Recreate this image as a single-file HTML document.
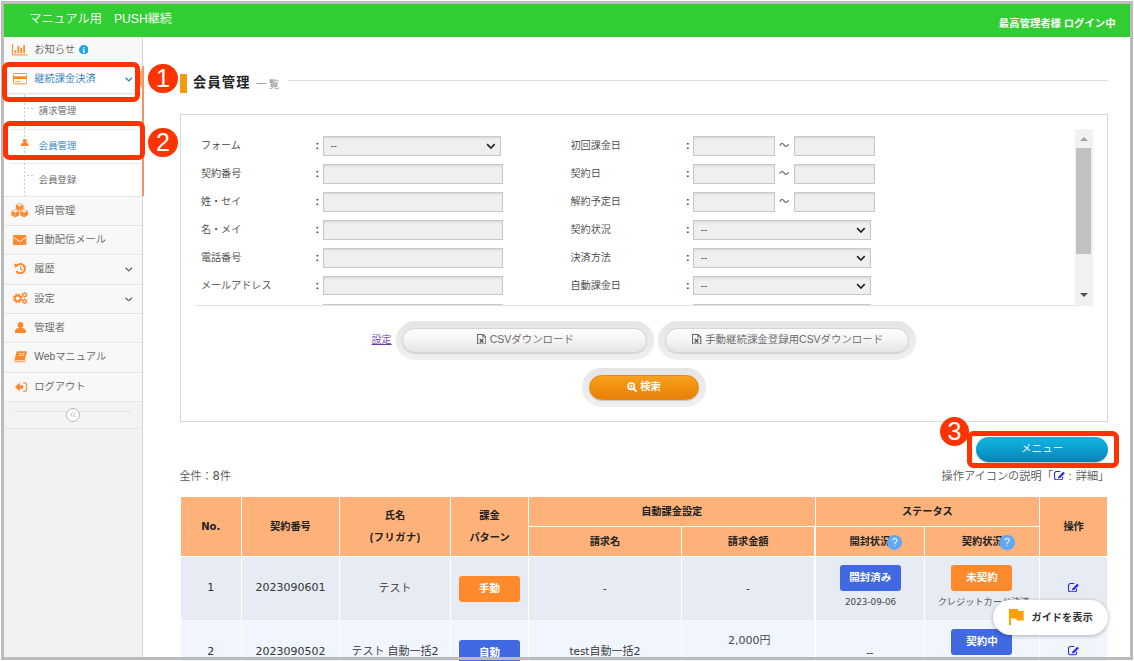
<!DOCTYPE html>
<html lang="ja">
<head>
<meta charset="utf-8">
<title>会員管理 一覧</title>
<style>
*{box-sizing:border-box;margin:0;padding:0}
html,body{width:1134px;height:661px;overflow:hidden;background:#fff}
body{position:relative;font-family:"Liberation Sans","Noto Sans CJK JP",sans-serif;color:#444;font-size:10px;font-weight:350}
.abs{position:absolute}
#frame{position:absolute;left:1px;top:1px;width:1132px;height:659px;border:3px solid #bbb;border-top-color:#c0bcc0;z-index:50;pointer-events:none}
#hdr{position:absolute;left:4px;top:4px;width:1126px;height:32.8px;background:#32cd32;z-index:5}
#hdr .ttl{position:absolute;left:25.3px;top:0;line-height:31px;font-size:12.15px;color:#fff;white-space:pre}
#hdr .usr{position:absolute;right:14.5px;top:0;line-height:39px;font-size:10.35px;font-weight:700;color:#fff;white-space:pre}
/* sidebar */
#side{position:absolute;left:4px;top:36.5px;width:139px;height:621px;background:#f2f2f2;border-right:1px solid #d3d3d3}
.mi{position:absolute;left:0;width:138px;height:29.3px;background:#f8f8f8;border-bottom:1px solid #e5e5e5;border-top:1px solid #fcfcfc;color:#626262;font-size:10.25px;line-height:26.4px;white-space:nowrap}
.mi .tx{position:absolute;left:30.3px;top:0}
.mi svg{position:absolute}
.mi.act{background:#fff;color:#2b7dbc}
#sub{position:absolute;left:0;top:58.8px;width:138px;height:101.5px;background:#fff;border-bottom:1px solid #e5e5e5}
.si{position:absolute;left:7px;width:131px;height:33.8px;font-size:9.4px;line-height:31.4px;color:#616161;white-space:nowrap}
.si .tx{position:absolute;left:27.8px;top:0}
.si.sep{border-top:1px solid #ebebeb}
.chev{position:absolute;left:121.5px;top:11.5px;width:7px;height:7px}

/* main */
#main{position:absolute;left:0;top:0;width:1134px;height:661px}
.ptbar{position:absolute;left:180px;top:73.5px;width:7px;height:19.7px;background:#f39c12}
.pt{position:absolute;left:193px;top:73.2px;font-size:13.2px;font-weight:700;color:#222;letter-spacing:1.2px;line-height:20px;white-space:nowrap}
.pts{position:absolute;left:256.3px;top:75.8px;font-size:10.4px;color:#888;letter-spacing:2px;line-height:18px;white-space:nowrap}
.ptline{position:absolute;left:288px;top:79.5px;width:820px;height:1px;background:#ddd}
#panel{position:absolute;left:180px;top:114px;width:928px;height:308.4px;border:1px solid #d9d9d9;background:#fff}
#scr{position:absolute;left:194.5px;top:129px;width:899px;height:177px;border-bottom:1px solid #e3e3e3;overflow:hidden}
.lb{position:absolute;font-size:10.1px;color:#444;line-height:19px;white-space:nowrap;margin-top:-.5px}
.lb.c{color:#333;font-weight:700;font-size:10.5px;margin-top:-.5px}
.inp{position:absolute;height:19.6px;margin-top:-.4px;background:#efefef;border:1px solid #c8c8c8;box-shadow:inset 0 1.5px 1.5px rgba(0,0,0,.08);font-size:9.5px;line-height:17px;color:#333;padding-left:6.5px}
.inp svg{position:absolute;right:4.3px;top:5.9px;width:9.8px;height:6.5px}
#sbar{position:absolute;left:1075px;top:129px;width:18px;height:177px;background:#f1f1f1}
#sbar .th{position:absolute;left:1.2px;top:18.7px;width:15px;height:106.6px;background:#c1c1c1}
#sbar .up{position:absolute;left:5px;top:8px;border:4px solid transparent;border-top:0;border-bottom:4.5px solid #a3a3a3}
#sbar .dn{position:absolute;left:5px;top:164px;border:4px solid transparent;border-bottom:0;border-top:4.5px solid #505050}

.lnk{position:absolute;left:371.6px;top:331.6px;font-size:10px;line-height:16px;color:#6a3aa5;text-decoration:underline;white-space:nowrap}
.halo{position:absolute;background:linear-gradient(#e5e5e5,#f0f0f0);border-radius:20px}
.gbtn{position:absolute;border:1px solid #d4d4d4;border-radius:13px;background:linear-gradient(#fefefe,#f4f4f4 50%,#e5e5e5);box-shadow:0 1px 1px rgba(0,0,0,.12);color:#666;font-size:10.45px;line-height:22px;text-align:center;white-space:nowrap}
.gbtn svg{display:inline-block;vertical-align:-1px;width:9.4px;height:10.4px;margin-right:3.6px;margin-left:1.5px}
.obtn{position:absolute;border:1px solid #e08a10;border-radius:13px;background:linear-gradient(#f7a01f,#f0900f 50%,#e6800a);box-shadow:0 1px 1px rgba(0,0,0,.18);color:#fff;font-size:10.4px;font-weight:700;line-height:22px;text-align:center;white-space:nowrap}
.obtn svg{display:inline-block;vertical-align:-1.5px;width:10px;height:10px;margin-right:3px}
.bbtn{position:absolute;left:976px;top:437.4px;width:132.3px;height:24.6px;border-radius:13px;background:linear-gradient(#12b4e0,#0b9fd0 50%,#0882b3);box-shadow:0 1px 1px rgba(0,0,0,.25);color:#fff;font-size:10.6px;line-height:23px;text-align:center;white-space:nowrap}
.note{position:absolute;font-size:11.2px;color:#555;line-height:16px;white-space:nowrap}
.note svg{display:inline-block;width:11.3px;height:9.3px;vertical-align:-.5px;margin:0 2.2px 0 .8px}

#tbl{position:absolute;left:0;top:0}
.hc{position:absolute;background:#feb27a;color:#222;font-weight:700;font-size:10.2px;text-align:center;white-space:nowrap;border-right:1px solid #fff;border-bottom:1px solid #fff;display:flex;align-items:center;justify-content:center;line-height:22px;padding-top:1.2px}
.bc{position:absolute;color:#333;font-size:11px;text-align:center;white-space:nowrap;border-right:1px solid #fff;display:flex;flex-direction:column;align-items:center;justify-content:center;line-height:16px;padding-bottom:1.2px}
.r1{background:#e7ebf4}.r2{background:#f0f5fe;border-top:1px solid #f9fbff}
.num{font-family:"DejaVu Sans","Noto Sans CJK JP",sans-serif;font-size:11px;font-weight:400}
.bdg{position:absolute;height:26px;border-radius:3px;color:#fff;font-weight:700;font-size:10.5px;line-height:24px;text-align:center}
.bo{background:#ff8a2b}.bb{background:#4169e1}
.q{position:absolute;width:15.4px;height:15.4px;border-radius:50%;background:#5ea8f7;color:#fff;font-size:10.5px;font-weight:400;line-height:15.4px;text-align:center;font-family:"Liberation Sans",sans-serif}
.sm{position:absolute;font-size:9.2px;color:#444;white-space:nowrap;line-height:14px}
.ed{position:absolute;width:11.3px;height:9.3px}
#guide{position:absolute;left:992.5px;top:599.7px;width:115.2px;height:35.3px;border-radius:18px;background:#fff;box-shadow:0 1px 4px rgba(0,0,0,.3);z-index:10}
#guide .t{position:absolute;left:39px;top:0;line-height:36.2px;font-size:10.2px;font-weight:700;color:#333;white-space:nowrap}
#guide svg{position:absolute;left:16.8px;top:9.7px;width:14.7px;height:16.2px}
/* markers */
.rbox{position:absolute;border:5px solid #ff3300;border-radius:6.5px;z-index:60}
.rnum{position:absolute;width:29.4px;height:29.4px;border-radius:50%;background:#ff3300;color:#fff;font-family:"Liberation Sans",sans-serif;font-size:25px;line-height:29px;text-align:center;z-index:61}
</style>
</head>
<body>
<div id="hdr"><div class="ttl">マニュアル用　PUSH継続</div><div class="usr">最高管理者様 ログイン中</div></div>

<div id="side">
  <div class="mi" style="top:-0.7px"><span class="tx">お知らせ</span></div>
  <div class="mi act" style="top:28.6px"><span class="tx">継続課金決済</span></div>
  <div id="sub">
    <div class="si" style="top:0"><span class="tx">請求管理</span></div>
    <div class="si sep" style="top:33.8px;color:#2b7dbc"><span class="tx">会員管理</span></div>
    <div class="si sep" style="top:67.6px"><span class="tx">会員登録</span></div>
  </div>
  <div class="mi" style="top:160.3px"><span class="tx">項目管理</span></div>
  <div class="mi" style="top:189.6px"><span class="tx">自動配信メール</span></div>
  <div class="mi" style="top:218.9px"><span class="tx">履歴</span></div>
  <div class="mi" style="top:248.2px"><span class="tx">設定</span></div>
  <div class="mi" style="top:277.5px"><span class="tx">管理者</span></div>
  <div class="mi" style="top:306.8px"><span class="tx">Webマニュアル</span></div>
  <div class="mi" style="top:336.1px"><span class="tx">ログアウト</span></div>
</div>

<div id="main">
<div class="ptbar"></div><div class="pt">会員管理</div><div class="pts">一覧</div><div class="ptline"></div>
<div id="panel"></div>
<div id="scr">
<div class="lb" style="left:6.4px;top:7.60px">フォーム</div><div class="lb c" style="left:121px;top:7.60px">:</div>
<div class="inp" style="left:128.5px;top:7.60px;width:178px">--<svg viewBox="0 0 9 6"><path d="M1 1 L4.5 4.6 L8 1" fill="none" stroke="#222" stroke-width="1.5"/></svg></div>
<div class="lb" style="left:376px;top:7.60px">初回課金日</div><div class="lb c" style="left:491.5px;top:7.60px">:</div>
<div class="inp" style="left:498.8px;top:7.60px;width:81.5px"></div><div class="lb" style="left:584.5px;top:7.60px">～</div><div class="inp" style="left:599.3px;top:7.60px;width:81.3px"></div>
<div class="lb" style="left:6.4px;top:35.53px">契約番号</div><div class="lb c" style="left:121px;top:35.53px">:</div>
<div class="inp" style="left:128.5px;top:35.53px;width:180px"></div>
<div class="lb" style="left:376px;top:35.53px">契約日</div><div class="lb c" style="left:491.5px;top:35.53px">:</div>
<div class="inp" style="left:498.8px;top:35.53px;width:81.5px"></div><div class="lb" style="left:584.5px;top:35.53px">～</div><div class="inp" style="left:599.3px;top:35.53px;width:81.3px"></div>
<div class="lb" style="left:6.4px;top:63.46px">姓・セイ</div><div class="lb c" style="left:121px;top:63.46px">:</div>
<div class="inp" style="left:128.5px;top:63.46px;width:180px"></div>
<div class="lb" style="left:376px;top:63.46px">解約予定日</div><div class="lb c" style="left:491.5px;top:63.46px">:</div>
<div class="inp" style="left:498.8px;top:63.46px;width:81.5px"></div><div class="lb" style="left:584.5px;top:63.46px">～</div><div class="inp" style="left:599.3px;top:63.46px;width:81.3px"></div>
<div class="lb" style="left:6.4px;top:91.39px">名・メイ</div><div class="lb c" style="left:121px;top:91.39px">:</div>
<div class="inp" style="left:128.5px;top:91.39px;width:180px"></div>
<div class="lb" style="left:376px;top:91.39px">契約状況</div><div class="lb c" style="left:491.5px;top:91.39px">:</div>
<div class="inp" style="left:498.8px;top:91.39px;width:178px">--<svg viewBox="0 0 9 6"><path d="M1 1 L4.5 4.6 L8 1" fill="none" stroke="#222" stroke-width="1.5"/></svg></div>
<div class="lb" style="left:6.4px;top:119.32px">電話番号</div><div class="lb c" style="left:121px;top:119.32px">:</div>
<div class="inp" style="left:128.5px;top:119.32px;width:180px"></div>
<div class="lb" style="left:376px;top:119.32px">決済方法</div><div class="lb c" style="left:491.5px;top:119.32px">:</div>
<div class="inp" style="left:498.8px;top:119.32px;width:178px">--<svg viewBox="0 0 9 6"><path d="M1 1 L4.5 4.6 L8 1" fill="none" stroke="#222" stroke-width="1.5"/></svg></div>
<div class="lb" style="left:6.4px;top:147.25px">メールアドレス</div><div class="lb c" style="left:121px;top:147.25px">:</div>
<div class="inp" style="left:128.5px;top:147.25px;width:180px"></div>
<div class="lb" style="left:376px;top:147.25px">自動課金日</div><div class="lb c" style="left:491.5px;top:147.25px">:</div>
<div class="inp" style="left:498.8px;top:147.25px;width:178px">--<svg viewBox="0 0 9 6"><path d="M1 1 L4.5 4.6 L8 1" fill="none" stroke="#222" stroke-width="1.5"/></svg></div>

<div class="inp" style="left:128.5px;top:175.18px;width:180px"></div>

<div class="inp" style="left:498.8px;top:175.18px;width:178px">--<svg viewBox="0 0 9 6"><path d="M1 1 L4.5 4.6 L8 1" fill="none" stroke="#222" stroke-width="1.5"/></svg></div>
</div>
<div class="lnk">設定</div>
<div class="halo" style="left:395.7px;top:320.6px;width:258px;height:39.4px"></div>
<div class="gbtn" style="left:402.3px;top:328.3px;width:244.7px;height:24.8px"><svg viewBox="0 0 8 10" preserveAspectRatio="none"><path d="M.5 .5h4.6l2.4 2.4v6.6h-7z M5 .6v2.4h2.4" fill="none" stroke="#666" stroke-width=".9"/><path d="M2.400 4.800l3 3.400M5.400 4.800L2.400 8.200" stroke="#555" stroke-width="1.150"/></svg>CSVダウンロード</div>
<div class="halo" style="left:658px;top:320.6px;width:258px;height:39.4px"></div>
<div class="gbtn" style="left:665.2px;top:328.3px;width:243.5px;height:24.8px"><svg viewBox="0 0 8 10" preserveAspectRatio="none"><path d="M.5 .5h4.6l2.4 2.4v6.6h-7z M5 .6v2.4h2.4" fill="none" stroke="#666" stroke-width=".9"/><path d="M2.400 4.800l3 3.400M5.400 4.800L2.400 8.200" stroke="#555" stroke-width="1.150"/></svg>手動継続課金登録用CSVダウンロード</div>
<div class="halo" style="left:581.7px;top:367.7px;width:124.8px;height:39.4px"></div>
<div class="obtn" style="left:589px;top:375.2px;width:110.2px;height:24.6px"><svg viewBox="0 0 10 10"><circle cx="4.2" cy="4.2" r="3.2" fill="none" stroke="#fff" stroke-width="1.6"/><path d="M6.5 6.5L9.3 9.3" stroke="#fff" stroke-width="1.9" stroke-linecap="round"/><path d="M2.6 4.2h3.2M4.2 2.6v3.2" stroke="#fff" stroke-width="1"/></svg>検索</div>
<div class="bbtn">メニュー</div>
<div class="note" style="left:941.5px;top:467.5px">操作アイコンの説明「<svg viewBox="0 0 11.3 9.3"><path d="M8.600 5.800V7A1.800 1.800 0 0 1 6.800 8.750H2.350A1.800 1.800 0 0 1 .55 7V2.350A1.800 1.800 0 0 1 2.350 .55H6.300" fill="none" stroke="#2828f0" stroke-width="1.100"/><path d="M3.900 7.600L4.500 5.500L9.300 .7L10.900 2.300L6.100 7.100z" fill="#2828f0"/></svg><span style="margin:0 4px 0 1.5px">:</span>詳細」</div>
<div class="note" style="left:179.6px;top:467.5px;font-size:11px">全件：<span class="num" style="font-size:11.5px">8</span>件</div>
<div id="tbl">
<div class="hc" style="left:180.5px;top:497px;width:61.4px;height:59.5px;"><span style="font-family:'DejaVu Sans',sans-serif;font-size:10px">No.</span></div>
<div class="hc" style="left:241.9px;top:497px;width:98.0px;height:59.5px;">契約番号</div>
<div class="hc" style="left:339.9px;top:497px;width:111.1px;height:59.5px;"><div>氏名<br><span style="letter-spacing:.55px;margin-left:.5px">(フリガナ)</span></div></div>
<div class="hc" style="left:451.0px;top:497px;width:78.0px;height:59.5px;"><div>課金<br>パターン</div></div>
<div class="hc" style="left:529.0px;top:497px;width:286.5px;height:29.5px;">自動課金設定</div>
<div class="hc" style="left:529.0px;top:526.5px;width:152.9px;height:30.0px;">請求名</div>
<div class="hc" style="left:681.9px;top:526.5px;width:133.6px;height:30.0px;">請求金額</div>
<div class="hc" style="left:815.5px;top:497px;width:224.7px;height:29.5px;">ステータス</div>
<div class="hc" style="left:815.5px;top:526.5px;width:109.7px;height:30.0px;">開封状況</div>
<div class="hc" style="left:925.2px;top:526.5px;width:115.0px;height:30.0px;">契約状況</div>
<div class="hc" style="left:1040.2px;top:497px;width:66.9px;height:59.5px;border-right:0">操作</div>
<div class="q" style="left:886.9px;top:534.8px">?</div><div class="q" style="left:999.2px;top:534.8px">?</div>
<div class="bc r1 num" style="left:180.5px;top:556.5px;width:61.4px;height:63.5px;">1</div>
<div class="bc r1 num" style="left:241.9px;top:556.5px;width:98.0px;height:63.5px;">2023090601</div>
<div class="bc r1" style="left:339.9px;top:556.5px;width:111.1px;height:63.5px;">テスト</div>
<div class="bc r1" style="left:451.0px;top:556.5px;width:78.0px;height:63.5px;"></div>
<div class="bc r1" style="left:529.0px;top:556.5px;width:152.9px;height:63.5px;">-</div>
<div class="bc r1" style="left:681.9px;top:556.5px;width:133.6px;height:63.5px;">-</div>
<div class="bc r1" style="left:815.5px;top:556.5px;width:109.7px;height:63.5px;"></div>
<div class="bc r1" style="left:925.2px;top:556.5px;width:115.0px;height:63.5px;"></div>
<div class="bc r1" style="left:1040.2px;top:556.5px;width:66.9px;height:63.5px;border-right:0"></div>
<div class="bdg bo" style="left:458.8px;top:576.1px;width:61.6px">手動</div>
<div class="bdg bb" style="left:839.7px;top:564.9px;width:61.3px">開封済み</div>
<div class="sm num" style="left:845px;top:595px;font-size:8.8px">2023-09-06</div>
<div class="bdg bo" style="left:951.4px;top:564.9px;width:61px">未契約</div>
<div class="sm" style="left:937.7px;top:595px">クレジットカード決済</div>
<svg class="ed" style="left:1067.9px;top:582.7px" viewBox="0 0 11.3 9.3"><path d="M8.600 5.800V7A1.800 1.800 0 0 1 6.800 8.750H2.350A1.800 1.800 0 0 1 .55 7V2.350A1.800 1.800 0 0 1 2.350 .55H6.300" fill="none" stroke="#2828f0" stroke-width="1.100"/><path d="M3.900 7.600L4.500 5.500L9.300 .7L10.900 2.300L6.100 7.100z" fill="#2828f0"/></svg>
<div class="bc r2 num" style="left:180.5px;top:620px;width:61.4px;height:64.0px;">2</div>
<div class="bc r2 num" style="left:241.9px;top:620px;width:98.0px;height:64.0px;">2023090502</div>
<div class="bc r2" style="left:339.9px;top:620px;width:111.1px;height:64.0px;"><div>テスト 自動一括<span class="num">2</span></div></div>
<div class="bc r2" style="left:451.0px;top:620px;width:78.0px;height:64.0px;"></div>
<div class="bc r2" style="left:529.0px;top:620px;width:152.9px;height:64.0px;"><div><span class="num" style="font-size:10.4px">test</span>自動一括<span class="num">2</span></div></div>
<div class="bc r2" style="left:681.9px;top:620px;width:133.6px;height:64.0px;"></div>
<div class="bc r2" style="left:815.5px;top:620px;width:109.7px;height:64.0px;">--</div>
<div class="bc r2" style="left:925.2px;top:620px;width:115.0px;height:64.0px;"></div>
<div class="bc r2" style="left:1040.2px;top:620px;width:66.9px;height:64.0px;border-right:0"></div>
<div class="bdg bb" style="left:458.8px;top:639.6px;width:61.6px">自動</div>
<div class="bdg bb" style="left:951.4px;top:628.5px;width:61px">契約中</div>
<div class="sm" style="left:728px;top:633px;font-size:11px"><span class="num">2,000</span>円</div>
<svg class="ed" style="left:1067.9px;top:646.4px" viewBox="0 0 11.3 9.3"><path d="M8.600 5.800V7A1.800 1.800 0 0 1 6.800 8.750H2.350A1.800 1.800 0 0 1 .55 7V2.350A1.800 1.800 0 0 1 2.350 .55H6.300" fill="none" stroke="#2828f0" stroke-width="1.100"/><path d="M3.900 7.600L4.500 5.500L9.300 .7L10.900 2.300L6.100 7.100z" fill="#2828f0"/></svg>
</div>
<div id="guide"><svg viewBox="5 4 15 17" preserveAspectRatio="none"><path d="M14.4 6L14 4H5v17h2v-7h5.6l.4 2h7V6z" fill="#ffa000"/></svg><div class="t">ガイドを表示</div></div>
<div id="sbar"><div class="th"></div><div class="up"></div><div class="dn"></div></div>
</div>

<div id="icons"><div class="abs" style="left:24.3px;top:95px;width:1px;height:101px;background:repeating-linear-gradient(to bottom,#b3d0e8 0,#b3d0e8 2px,transparent 2px,transparent 4px)"></div><div class="abs" style="left:26.5px;top:107.7px;width:6.5px;height:1px;background:repeating-linear-gradient(to right,#b3d0e8 0,#b3d0e8 2.5px,transparent 2.5px,transparent 4px)"></div><div class="abs" style="left:26.5px;top:175.3px;width:6.5px;height:1px;background:repeating-linear-gradient(to right,#b3d0e8 0,#b3d0e8 2.5px,transparent 2.5px,transparent 4px)"></div><div class="abs" style="left:141.8px;top:65.5px;width:2px;height:130.5px;background:#f79263"></div><svg class="abs" style="left:134px;top:66px;width:9px;height:25px" viewBox="0 0 9 25"><path d="M8.5 1.500V23.500L2.500 12.500z" fill="#f8a67e"/></svg><div class="abs" style="left:4px;top:401.5px;width:138px;height:27px;background:#f3f3f3;border-bottom:1px solid #e5e5e5"></div><div class="abs" style="left:15px;top:411px;width:116px;height:1px;background:#e4e4e4"></div><div class="abs" style="left:66.2px;top:407.6px;width:14px;height:14px;border-radius:50%;background:#fff;border:1px solid #bbb"></div><svg class="abs" style="left:70px;top:411.8px;width:6.4px;height:5.6px;" viewBox="0 0 6.4 5.6"><path d="M2.800 .4L.600 2.800L2.800 5.200M5.600 .4L3.400 2.800L5.600 5.200" fill="none" stroke="#aaa" stroke-width=".8"/></svg><svg class="abs" style="left:12.2px;top:44.2px;width:15.5px;height:11.5px;" viewBox="0 0 15.5 11.5"><path d="M.5 0V10.9H15.5" fill="none" stroke="#ff892a" stroke-width="1"/><path d="M3.4 9.2v-3M6.3 9.2v-7.200M9.200 9.200v-5.300M12.100 9.200v-8.200" stroke="#ff892a" stroke-width="1.7"/></svg>
<svg class="abs" style="left:78.5px;top:44.9px;width:9.5px;height:9.5px;" viewBox="0 0 9.5 9.5"><circle cx="4.75" cy="4.75" r="4.75" fill="#1aa7e0"/><path d="M4.1 2.2h1.400v1.300H4.100zM3.700 4.300h1.800v2.500h.5v.9H3.700v-.9h.5V5.200h-.5z" fill="#fff"/></svg>
<svg class="abs" style="left:12.9px;top:73.3px;width:14.3px;height:11.4px;" viewBox="0 0 14.3 11.4"><rect x=".5" y=".5" width="13.3" height="10.4" rx="1.3" fill="none" stroke="#ff892a" stroke-width="1"/><rect x=".5" y="3.300" width="13.300" height="2.700" fill="#ff892a"/><path d="M2.200 8.600h1.500M4.500 8.600h2.400" stroke="#ff892a" stroke-width="1"/></svg>
<svg class="abs" style="left:125.2px;top:77.0px;width:7.6px;height:4.8px;" viewBox="0 0 7.6 4.8"><path d="M.6 .7L3.800 3.900L7 .7" fill="none" stroke="#2b7dbc" stroke-width="1.3"/></svg>
<svg class="abs" style="left:125.2px;top:267.3px;width:7.6px;height:4.8px;" viewBox="0 0 7.6 4.8"><path d="M.6 .7L3.800 3.900L7 .7" fill="none" stroke="#666" stroke-width="1.3"/></svg>
<svg class="abs" style="left:125.2px;top:296.6px;width:7.6px;height:4.8px;" viewBox="0 0 7.6 4.8"><path d="M.6 .7L3.800 3.900L7 .7" fill="none" stroke="#666" stroke-width="1.3"/></svg>
<svg class="abs" style="left:21.3px;top:138.5px;width:7.6px;height:7.8px;" viewBox="0 0 7.6 7.8"><circle cx="3.800" cy="2.100" r="2.100" fill="#ff892a"/><path d="M0 7.800V5.900C0 4.300 1.400 3.500 3.800 3.500S7.600 4.300 7.600 5.900V7.800z" fill="#ff892a"/></svg>
<svg class="abs" style="left:11.2px;top:203.4px;width:17.4px;height:14.4px;" viewBox="0 0 17.4 14.4"><path d="M8.7 0L12.50 2.00V6.00L8.7 8L4.90 6.00V2.00z" fill="#ff892a"/><path d="M8.7 0.51L11.56 2.00L8.7 3.49L5.83 2.00z" fill="#ffeee0"/><path d="M8.7 4.30V7.30" stroke="#fcc9a6" stroke-width=".7"/><path d="M4.3 6.200000000000001L8.20 8.25V12.35L4.3 14.4L0.41 12.35V8.25z" fill="#ff892a"/><path d="M4.3 6.71L7.26 8.25L4.3 9.79L1.34 8.25z" fill="#ffeee0"/><path d="M4.3 10.60V13.70" stroke="#fcc9a6" stroke-width=".7"/><path d="M13.1 6.200000000000001L16.99 8.25V12.35L13.1 14.4L9.21 12.35V8.25z" fill="#ff892a"/><path d="M13.1 6.71L16.06 8.25L13.1 9.79L10.14 8.25z" fill="#ffeee0"/><path d="M13.1 10.60V13.70" stroke="#fcc9a6" stroke-width=".7"/></svg>
<svg class="abs" style="left:13.4px;top:234.9px;width:13.4px;height:10.1px;" viewBox="0 0 13.4 10.1"><rect width="13.4" height="10.1" rx="1.1" fill="#ff892a"/><path d="M.3 2.300L6.700 6.800L13.100 2.300" fill="none" stroke="#f8f8f8" stroke-width="1"/></svg>
<svg class="abs" style="left:13.7px;top:263.4px;width:12.3px;height:11px;" viewBox="0 0 12.3 11"><path d="M2.300 3.400A4.600 4.600 0 1 1 2.400 8.100" fill="none" stroke="#ff892a" stroke-width="2"/><path d="M0 .6L4.600 1.400L1.200 5z" fill="#ff892a"/><path d="M6.600 3.300V6L8.300 7.200" fill="none" stroke="#ff892a" stroke-width="1.200"/></svg>
<svg class="abs" style="left:13px;top:292.2px;width:14.5px;height:12.3px;" viewBox="0 0 14.5 12.3"><circle cx="4.7" cy="6.3" r="3.5" fill="#ff892a"/><path d="M7.47 7.44L9.05 8.09" stroke="#ff892a" stroke-width="2.00"/><path d="M5.86 9.07L6.51 10.64" stroke="#ff892a" stroke-width="2.00"/><path d="M3.56 9.07L2.91 10.65" stroke="#ff892a" stroke-width="2.00"/><path d="M1.93 7.46L0.36 8.11" stroke="#ff892a" stroke-width="2.00"/><path d="M1.93 5.16L0.35 4.51" stroke="#ff892a" stroke-width="2.00"/><path d="M3.54 3.53L2.89 1.96" stroke="#ff892a" stroke-width="2.00"/><path d="M5.84 3.53L6.49 1.95" stroke="#ff892a" stroke-width="2.00"/><path d="M7.47 5.14L9.04 4.49" stroke="#ff892a" stroke-width="2.00"/><circle cx="4.7" cy="6.3" r="1.9" fill="#f8f8f8"/><circle cx="11.6" cy="2.9" r="2" fill="#ff892a"/><path d="M12.90 3.65L14.07 4.32" stroke="#ff892a" stroke-width="1.40"/><path d="M11.61 4.40L11.61 5.75" stroke="#ff892a" stroke-width="1.40"/><path d="M10.30 3.65L9.14 4.33" stroke="#ff892a" stroke-width="1.40"/><path d="M10.30 2.15L9.13 1.48" stroke="#ff892a" stroke-width="1.40"/><path d="M11.59 1.40L11.59 0.05" stroke="#ff892a" stroke-width="1.40"/><path d="M12.90 2.15L14.06 1.47" stroke="#ff892a" stroke-width="1.40"/><circle cx="11.6" cy="2.9" r="1" fill="#f8f8f8"/><circle cx="11.6" cy="9.4" r="2" fill="#ff892a"/><path d="M12.90 10.15L14.07 10.82" stroke="#ff892a" stroke-width="1.40"/><path d="M11.61 10.90L11.61 12.25" stroke="#ff892a" stroke-width="1.40"/><path d="M10.30 10.15L9.14 10.83" stroke="#ff892a" stroke-width="1.40"/><path d="M10.30 8.65L9.13 7.98" stroke="#ff892a" stroke-width="1.40"/><path d="M11.59 7.90L11.59 6.55" stroke="#ff892a" stroke-width="1.40"/><path d="M12.90 8.65L14.06 7.97" stroke="#ff892a" stroke-width="1.40"/><circle cx="11.6" cy="9.4" r="1" fill="#f8f8f8"/></svg>
<svg class="abs" style="left:14.7px;top:321.6px;width:10.9px;height:11.7px;" viewBox="0 0 10.9 11.7"><circle cx="5.450" cy="3" r="2.900" fill="#ff892a"/><path d="M0 11.700V9.300C0 6.900 2 5.700 5.450 5.700S10.900 6.900 10.900 9.300V11.700z" fill="#ff892a"/></svg>
<svg class="abs" style="left:13.7px;top:351.4px;width:13.1px;height:11.2px;" viewBox="0 0 13.1 11.2"><path d="M3.600 .2H12.200Q13.200 .2 12.900 1.200L10.900 8.600Q10.700 9.300 9.900 9.300H1.600Q.300 9.300 .7 8.100L2.500 1.100Q2.800 .2 3.600 .2z" fill="#ff892a"/><path d="M.9 9.200Q.4 10.800 1.900 10.800H10.300Q11 10.800 11.200 10.100L11.500 9" fill="none" stroke="#ff892a" stroke-width=".9"/><path d="M5 2.600H10.600M4.600 4.300H10.200" stroke="#f8f8f8" stroke-width=".7"/></svg>
<svg class="abs" style="left:14.7px;top:381.9px;width:12.1px;height:10.1px;" viewBox="0 0 12.1 10.1"><path d="M0 5.050L4.700 .5V3.300H8.200V6.800H4.700V9.600z" fill="#ff892a"/><path d="M8.200 .9H9.900A1.700 1.700 0 0 1 11.600 2.600V7.500A1.700 1.700 0 0 1 9.900 9.200H8.200" fill="none" stroke="#ff892a" stroke-width="1.300"/></svg></div>
<div class="rbox" style="left:2px;top:62px;width:138px;height:39.8px"></div>
<div class="rnum" style="left:148.3px;top:64px">1</div>
<div class="rbox" style="left:2.5px;top:120.6px;width:142px;height:39.7px"></div>
<div class="rnum" style="left:148.3px;top:127.8px">2</div>
<div class="rbox" style="left:967px;top:431px;width:152.3px;height:36.5px"></div>
<div class="rnum" style="left:939.8px;top:417px">3</div>

<div id="frame"></div>
</body>
</html>
